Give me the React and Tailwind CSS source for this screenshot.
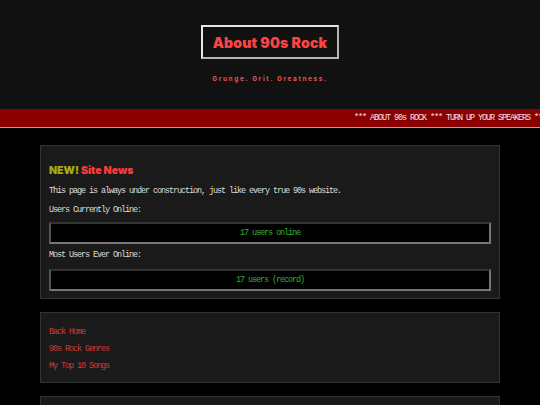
import React from 'react'

const mono = "font-['Liberation_Mono','DejaVu_Sans_Mono',monospace]"
const small = 'text-[8.5px] tracking-[-1.1px]'

function StatBox({ children }) {
  return (
    <div className={`h-[22px] flex items-center justify-center bg-black border-2 border-t-[#333] border-l-[#555] border-b-[#777] border-r-[#777] ${small} text-[#2fb52f]`}>
      {children}
    </div>
  )
}

export default function App() {
  return (
    <div className={`min-h-screen bg-black text-[#ddd] ${mono}`}>
      {/* Header */}
      <header className="h-[109px] bg-[#111] flex flex-col items-center pt-[25px]">
        <div className="h-[34px] w-[138px] flex items-center justify-center border-2 border-t-[#e6e6e6] border-l-[#e6e6e6] border-b-[#b5b5b5] border-r-[#b5b5b5] bg-[#111]">
          <h1 className="font-['Inter',sans-serif] font-black text-[14px] tracking-[0.2px] text-[#ff4343]">
            About 90s Rock
          </h1>
        </div>
        <p className="mt-[16px] font-['Inter',sans-serif] font-bold text-[6.5px] tracking-[1.6px] text-[#e35555]">
          Grunge. Grit. Greatness.
        </p>
      </header>

      {/* Marquee */}
      <div className="h-[19px] bg-[#8b0000] border-b border-[#d89090] overflow-hidden whitespace-nowrap flex items-center">
        <div className={`pl-[354px] ${small} text-[#f2e2e2]`}>
          *** ABOUT 90s ROCK *** TURN UP YOUR SPEAKERS *** ABOUT 90s ROCK ***
        </div>
      </div>

      <main className="px-[40px] pt-[17px] flex flex-col gap-[13px]">
        {/* News */}
        <section className="bg-[#1a1a1a] border border-[#333] px-[8px] pt-[18px] pb-[7px]">
          <h2 className="font-['Inter',sans-serif] font-black text-[10.5px] leading-[14px]">
            <span className="text-[#a8a813]">NEW!</span>{' '}
            <span className="text-[#ff3c3c]">Site News</span>
          </h2>
          <p className={`mt-[7px] ${small} leading-[12px]`}>
            This page is always under construction, just like every true 90s website.
          </p>
          <p className={`mt-[7px] ${small} leading-[12px]`}>Users Currently Online:</p>
          <div className="mt-[6px]">
            <StatBox>17 users online</StatBox>
          </div>
          <p className={`mt-[5px] ${small} leading-[12px]`}>Most Users Ever Online:</p>
          <div className="mt-[8px]">
            <StatBox>17 users (record)</StatBox>
          </div>
        </section>

        {/* Nav */}
        <nav className="bg-[#1a1a1a] border border-[#333] px-[8px] pt-[11px] pb-[7px] flex flex-col">
          {['Back Home', '90s Rock Genres', 'My Top 10 Songs'].map((l) => (
            <a key={l} href="#" className={`h-[17px] flex items-center ${small} text-[#d03a3a]`}>
              {l}
            </a>
          ))}
        </nav>

        <section className="bg-[#1a1a1a] border border-[#333] h-[60px]" />
      </main>
    </div>
  )
}
